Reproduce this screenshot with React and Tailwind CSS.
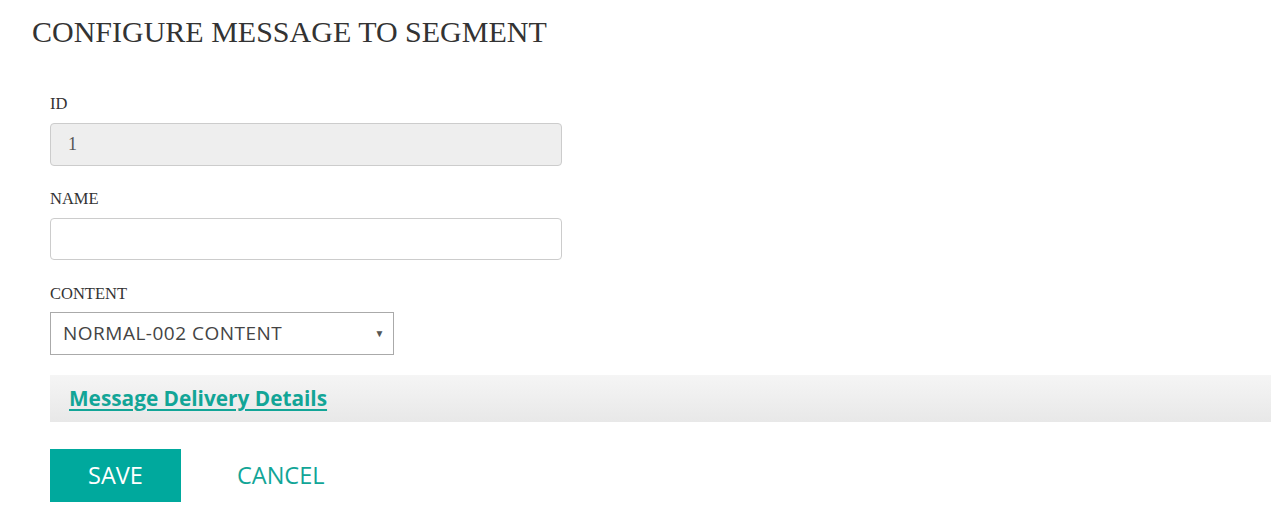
export default function App() {
  return (
    <div className="min-h-screen bg-white font-['Liberation_Serif',serif] text-[#333]">
      <div className="pl-[32px] pr-[14px] pt-[12px]">
        <h1 className="text-[30px] leading-[40px] text-[#333]">
          CONFIGURE MESSAGE TO SEGMENT
        </h1>
        <form className="pl-[18px] pt-[42px]" onSubmit={(e) => e.preventDefault()}>
          <div className="w-[512px]">
            <label className="block text-[16.5px] leading-[20px]">ID</label>
            <div className="mt-[9px] flex h-[43px] items-center rounded-[4px] border border-[#ccc] bg-[#eee] px-[17px] text-[18px] text-[#555]">
              1
            </div>
            <label className="mt-[23px] block text-[16.5px] leading-[20px]">NAME</label>
            <input
              type="text"
              className="mt-[9px] block h-[42px] w-full rounded-[4px] border border-[#ccc] bg-white px-[17px] outline-none"
            />
            <label className="mt-[24px] block text-[16.5px] leading-[20px]">CONTENT</label>
          </div>
          <div className="mt-[8px] flex h-[43px] w-[344px] items-center justify-between border border-[#aaa] bg-white pl-[12px] pr-[8px] font-['Open_Sans',sans-serif] text-[19px] tracking-[0.5px] text-[#444]">
            <span>NORMAL-002 CONTENT</span>
            <span className="text-[10px] text-[#555]">▼</span>
          </div>
          <div className="mt-[20px] flex h-[47px] items-center bg-gradient-to-b from-[#f5f5f5] to-[#e8e8e8] pl-[19px]">
            <a
              href="#"
              className="font-['Open_Sans',sans-serif] text-[20.8px] font-bold text-[#12a597] underline underline-offset-[3px]"
            >
              Message Delivery Details
            </a>
          </div>
          <div className="mt-[27px] flex items-center">
            <button
              type="submit"
              className="h-[53px] w-[131px] bg-[#00a99d] font-['Open_Sans',sans-serif] text-[23.5px] text-white"
            >
              SAVE
            </button>
            <button
              type="button"
              className="ml-[56px] font-['Open_Sans',sans-serif] text-[23.5px] text-[#12a597]"
            >
              CANCEL
            </button>
          </div>
        </form>
      </div>
    </div>
  );
}
